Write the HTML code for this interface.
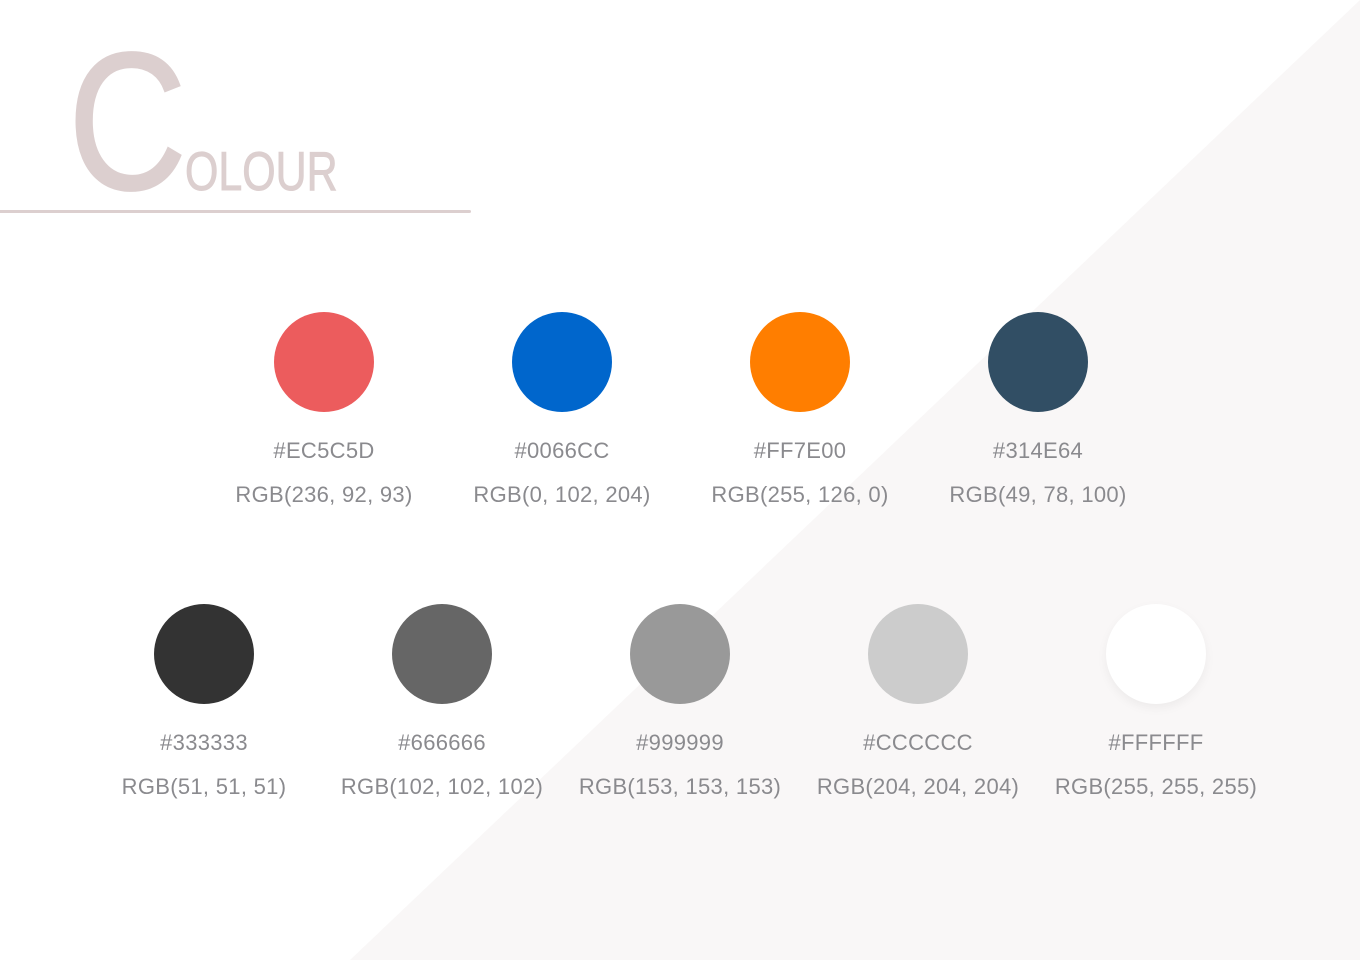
<!DOCTYPE html>
<html><head><meta charset="utf-8"><style>
html,body{margin:0;padding:0;width:1360px;height:960px;overflow:hidden;background:#fff;font-family:"Liberation Sans",sans-serif;}
.bg{position:absolute;left:0;top:0}
.t{position:absolute;color:#dccfcf;line-height:1;white-space:nowrap;transform-origin:0 0}
.line{position:absolute;left:0;top:210px;width:471px;height:3px;background:#dccfcf;border-radius:0 2px 2px 0}
.sw{position:absolute;width:238px;text-align:center;color:#8a8a8e;font-size:22px;letter-spacing:0.3px}
.c{width:100px;height:100px;border-radius:50%;margin:0 auto}
.h{margin-top:27px;height:24px;line-height:24px}
.r{margin-top:20px;height:24px;line-height:24px}
</style></head><body>
<svg class="bg" width="1360" height="960"><polygon points="1360,0 1360,960 350,960" fill="#f9f7f7"/></svg>
<div class="t" style="left:68px;top:24px;font-size:196px;transform:scaleX(0.84);-webkit-text-stroke:2px #dccfcf">C</div>
<div class="t" style="left:185px;top:144px;font-size:55px;transform:scaleX(0.78);-webkit-text-stroke:1px #dccfcf">OLOUR</div>
<div class="line"></div>

<div class="sw" style="left:205px;top:312px"><div class="c" style="background:#EC5C5D"></div><div class="h">#EC5C5D</div><div class="r">RGB(236, 92, 93)</div></div>
<div class="sw" style="left:443px;top:312px"><div class="c" style="background:#0066CC"></div><div class="h">#0066CC</div><div class="r">RGB(0, 102, 204)</div></div>
<div class="sw" style="left:681px;top:312px"><div class="c" style="background:#FF7E00"></div><div class="h">#FF7E00</div><div class="r">RGB(255, 126, 0)</div></div>
<div class="sw" style="left:919px;top:312px"><div class="c" style="background:#314E64"></div><div class="h">#314E64</div><div class="r">RGB(49, 78, 100)</div></div>

<div class="sw" style="left:85px;top:604px"><div class="c" style="background:#333"></div><div class="h">#333333</div><div class="r">RGB(51, 51, 51)</div></div>
<div class="sw" style="left:323px;top:604px"><div class="c" style="background:#666"></div><div class="h">#666666</div><div class="r">RGB(102, 102, 102)</div></div>
<div class="sw" style="left:561px;top:604px"><div class="c" style="background:#999"></div><div class="h">#999999</div><div class="r">RGB(153, 153, 153)</div></div>
<div class="sw" style="left:799px;top:604px"><div class="c" style="background:#ccc"></div><div class="h">#CCCCCC</div><div class="r">RGB(204, 204, 204)</div></div>
<div class="sw" style="left:1037px;top:604px"><div class="c" style="background:#fff;box-shadow:0 4px 10px rgba(0,0,0,0.05)"></div><div class="h">#FFFFFF</div><div class="r">RGB(255, 255, 255)</div></div>
</body></html>
